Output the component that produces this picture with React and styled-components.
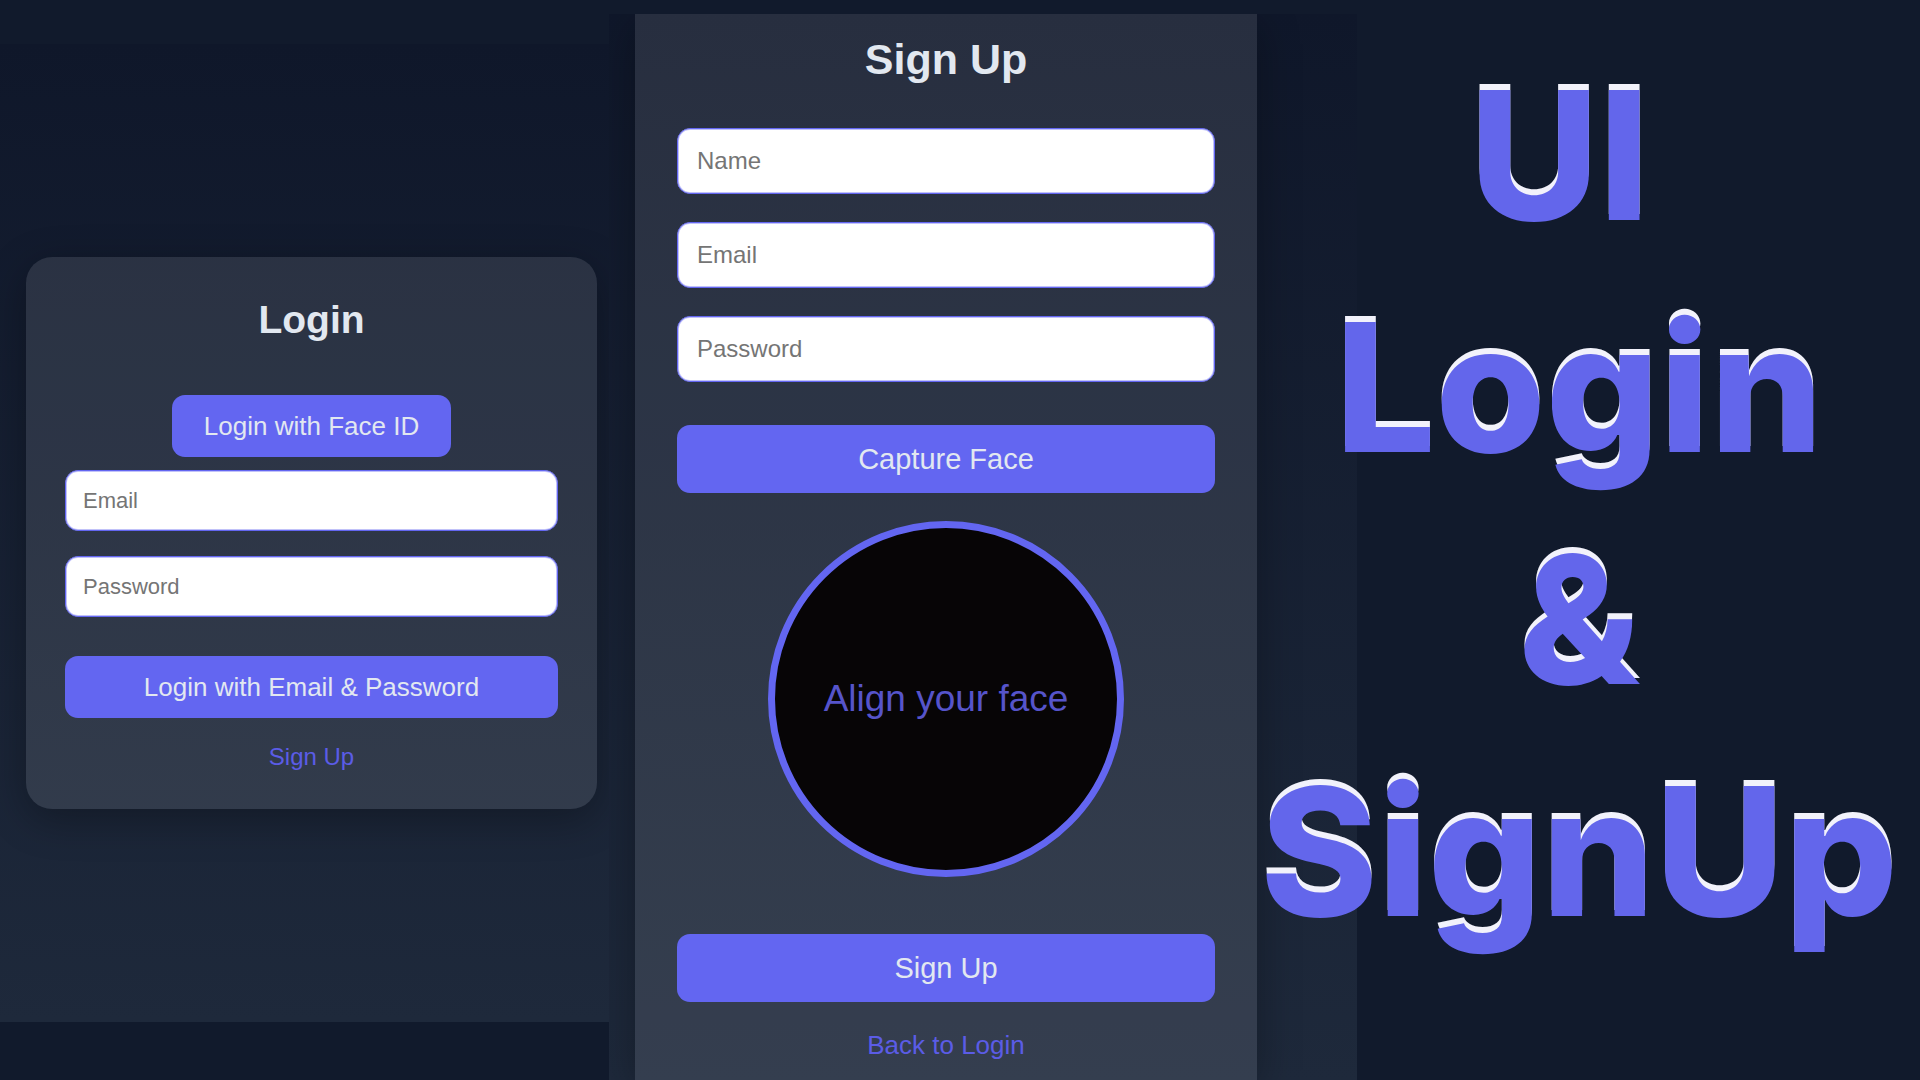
import React, { useState } from 'react';
import styled, { createGlobalStyle } from 'styled-components';

const GlobalStyle = createGlobalStyle`
  * {
    box-sizing: border-box;
  }

  body {
    margin: 0;
    background: #111a2c;
    font-family: 'Liberation Sans', Arial, sans-serif;
    color: #e2e8f0;
  }
`;

const Page = styled.div`
  display: grid;
  grid-template-columns: minmax(0, 609fr) minmax(0, 748fr) minmax(0, 563fr);
  min-height: 100vh;
  overflow: hidden;
`;

// Gradient backdrop behind each form
const Screen = styled.section`
  display: flex;
  align-items: center;
  overflow: hidden;
  background: linear-gradient(#0f172a, #1e293b);
`;

const LoginScreen = styled(Screen)`
  margin: 44px 0 58px;
  padding: 0 12px 0 26px;
`;

const SignUpScreen = styled(Screen)`
  margin-top: 14px;
  padding: 0 100px 0 26px;
`;

const Card = styled.form`
  display: flex;
  flex-direction: column;
  align-items: center;
  width: 100%;
  background: rgba(255, 255, 255, 0.1);
  box-shadow: 0 10px 40px rgba(0, 0, 0, 0.3);
`;

const LoginCard = styled(Card)`
  padding: 40px 39px 39px;
  border-radius: 26px;
`;

const SignUpCard = styled(Card)`
  padding: 20px 42px;
`;

const Heading = styled.h2`
  margin: 0 0 ${({ $large }) => ($large ? 44 : 52)}px;
  font-size: ${({ $large }) => ($large ? 43 : 39)}px;
  line-height: ${({ $large }) => ($large ? 50 : 46)}px;
`;

const Fields = styled.div`
  display: flex;
  flex-direction: column;
  gap: ${({ $large }) => ($large ? 28 : 25)}px;
  width: 100%;
  margin-bottom: ${({ $large }) => ($large ? 43 : 39)}px;
`;

const Input = styled.input`
  width: 100%;
  height: ${({ $large }) => ($large ? 66 : 61)}px;
  padding: 0 ${({ $large }) => ($large ? 19 : 17)}px;
  border: 1px solid #6366f1;
  border-radius: 13px;
  background: #fff;
  box-shadow: inset 0 0 0 1px rgba(99, 102, 241, 0.4);
  color: #1e293b;
  font-family: inherit;
  font-size: ${({ $large }) => ($large ? 24 : 22)}px;

  &::placeholder {
    color: #757575;
    opacity: 1;
  }
`;

const Button = styled.button`
  width: ${({ $fit }) => ($fit ? 'auto' : '100%')};
  height: ${({ $large }) => ($large ? 68 : 62)}px;
  padding: 0 32px;
  border: none;
  border-radius: 13px;
  background: #6366f1;
  color: #e2e8f0;
  font-family: inherit;
  font-size: ${({ $large }) => ($large ? 29 : 26)}px;
  cursor: pointer;
`;

const FaceButton = styled(Button)`
  margin-bottom: 13px;
`;

const TextLink = styled.a`
  margin-top: ${({ $large }) => ($large ? 28 : 26)}px;
  color: #5b5ce6;
  font-size: ${({ $large }) => ($large ? 26 : 24)}px;
  line-height: ${({ $large }) => ($large ? 30 : 26)}px;
  text-decoration: none;
`;

const Camera = styled.div`
  display: flex;
  align-items: center;
  justify-content: center;
  width: 356px;
  height: 356px;
  margin: 28px 0 57px;
  border: 7px solid #6366f1;
  border-radius: 50%;
  background: #070506;
  color: #5654ca;
  font-size: 37px;
`;

const Title = styled.h1`
  position: relative;
  margin: 0 0 0 -119px;
  padding-top: 40px;
  color: #6366eb;
  font-family: Inter, 'Open Sans', sans-serif;
  font-size: 178px;
  font-weight: 800;
  line-height: 232px;
  text-align: center;
  text-shadow: 0 -6px 0 #f2f2fb;
`;

const TitleLine = styled.span`
  display: block;
  white-space: pre;
`;

const LoginForm = () => {
  const [email, setEmail] = useState('');
  const [password, setPassword] = useState('');

  return (
    <LoginCard onSubmit={(e) => e.preventDefault()}>
      <Heading>Login</Heading>
      <FaceButton type="button" $fit>Login with Face ID</FaceButton>
      <Fields>
        <Input
          type="email"
          placeholder="Email"
          aria-label="Email"
          value={email}
          onChange={(e) => setEmail(e.target.value)}
        />
        <Input
          type="password"
          placeholder="Password"
          aria-label="Password"
          value={password}
          onChange={(e) => setPassword(e.target.value)}
        />
      </Fields>
      <Button type="submit">Login with Email &amp; Password</Button>
      <TextLink href="#signup">Sign Up</TextLink>
    </LoginCard>
  );
};

const SignUpForm = () => {
  const [user, setUser] = useState({ name: '', email: '', password: '' });

  const handleChange = (e) => {
    setUser({ ...user, [e.target.name]: e.target.value });
  };

  return (
    <SignUpCard id="signup" onSubmit={(e) => e.preventDefault()}>
      <Heading $large>Sign Up</Heading>
      <Fields $large>
        <Input $large type="text" name="name" placeholder="Name" aria-label="Name" value={user.name} onChange={handleChange} />
        <Input $large type="email" name="email" placeholder="Email" aria-label="Email" value={user.email} onChange={handleChange} />
        <Input $large type="password" name="password" placeholder="Password" aria-label="Password" value={user.password} onChange={handleChange} />
      </Fields>
      <Button $large type="button">Capture Face</Button>
      <Camera>Align your face</Camera>
      <Button $large type="submit">Sign Up</Button>
      <TextLink $large href="#login">Back to Login</TextLink>
    </SignUpCard>
  );
};

const App = () => {
  return (
    <>
      <GlobalStyle />
      <Page>
        <LoginScreen id="login">
          <LoginForm />
        </LoginScreen>
        <SignUpScreen>
          <SignUpForm />
        </SignUpScreen>
        <Title>
          <TitleLine>{'UI '}</TitleLine>
          <TitleLine>Login</TitleLine>
          <TitleLine>&amp;</TitleLine>
          <TitleLine>SignUp</TitleLine>
        </Title>
      </Page>
    </>
  );
};

export default App;
